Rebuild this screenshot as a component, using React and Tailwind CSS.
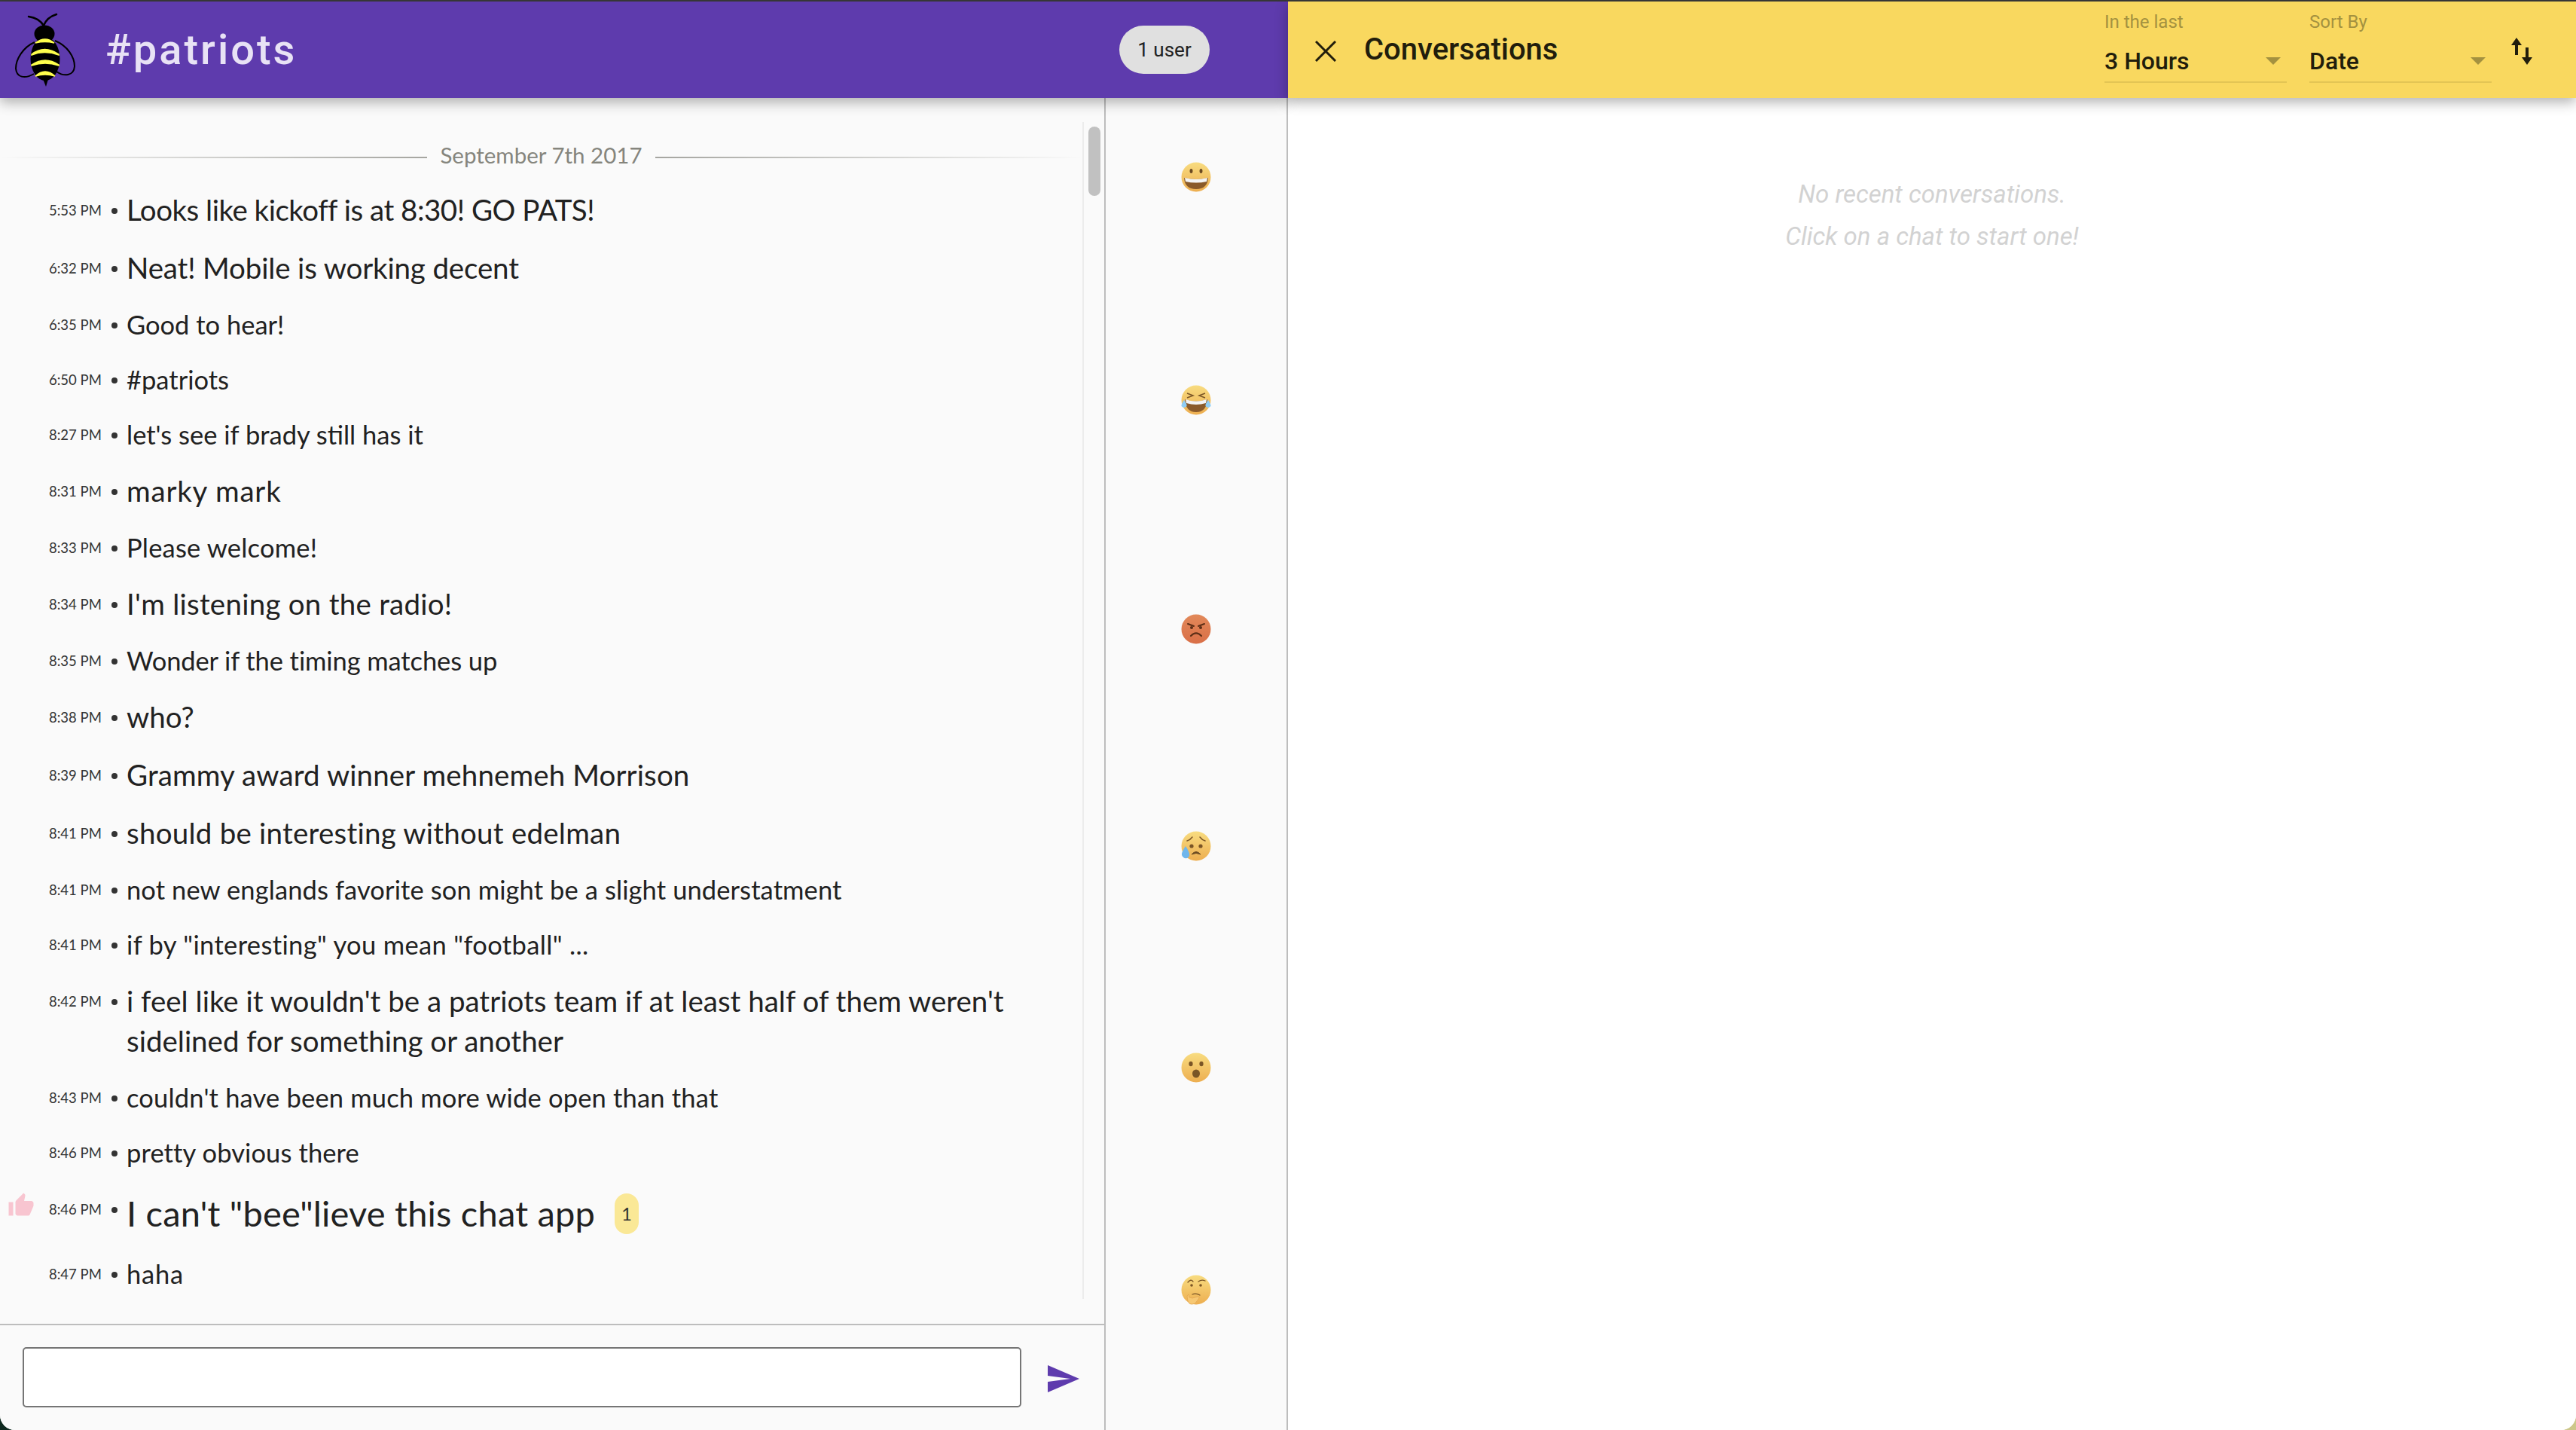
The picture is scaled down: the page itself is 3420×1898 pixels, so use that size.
import React from 'react';

const big = { text: 'text-[38.5px] leading-[53px]', time: 'h-[53px]' };
const mid = { text: 'text-[34.5px] leading-[49px]', time: 'h-[49px]' };
const huge = { text: 'text-[47px] leading-[64px]', time: 'h-[54px]' };

const messages = [
  { time: '5:53 PM', text: 'Looks like kickoff is at 8:30! GO PATS!', size: big, track: 'tracking-[-0.5px]' },
  { time: '6:32 PM', text: 'Neat! Mobile is working decent', size: big, track: 'tracking-[-0.15px]' },
  { time: '6:35 PM', text: 'Good to hear!', size: mid },
  { time: '6:50 PM', text: '#patriots', size: mid },
  { time: '8:27 PM', text: "let's see if brady still has it", size: mid },
  { time: '8:31 PM', text: 'marky mark', size: big, track: 'tracking-[0.8px]' },
  { time: '8:33 PM', text: 'Please welcome!', size: mid, track: 'tracking-[0.2px]' },
  { time: '8:34 PM', text: "I'm listening on the radio!", size: big, track: 'tracking-[0.25px]' },
  { time: '8:35 PM', text: 'Wonder if the timing matches up', size: mid, track: 'tracking-[-0.1px]' },
  { time: '8:38 PM', text: 'who?', size: big },
  { time: '8:39 PM', text: 'Grammy award winner mehnemeh Morrison', size: big, track: 'tracking-[0.12px]' },
  { time: '8:41 PM', text: 'should be interesting without edelman', size: big, track: 'tracking-[0.24px]' },
  { time: '8:41 PM', text: 'not new englands favorite son might be a slight understatment', size: mid, track: 'tracking-[0.1px]' },
  { time: '8:41 PM', text: 'if by "interesting" you mean "football" ...', size: mid, track: 'tracking-[0.35px]' },
  { time: '8:42 PM', text: "i feel like it wouldn't be a patriots team if at least half of them weren't\nsidelined for something or another", size: big },
  { time: '8:43 PM', text: "couldn't have been much more wide open than that", size: mid, track: 'tracking-[0.18px]' },
  { time: '8:46 PM', text: 'pretty obvious there', size: mid, track: 'tracking-[0.1px]' },
  { time: '8:46 PM', text: 'I can\'t "bee"lieve this chat app', size: huge, track: 'tracking-[0.2px]', liked: true, likes: 1 },
  { time: '8:47 PM', text: 'haha', size: mid, track: 'tracking-[0.8px]' },
];

function Bee() {
  return (
    <svg viewBox="0 0 130 130" className="h-[130px] w-[130px] shrink-0">
      <path d="M38 21Q52 23 58 33M75 18Q62 22 58 33" fill="none" stroke="#000" strokeWidth="2.5" strokeLinecap="round" />
      <path d="M46 55C30 62 21 78 21 90C22 102 33 104 45 97M73 53C90 60 99 75 99 87C98 100 85 101 75 94" fill="none" stroke="#000" strokeWidth="2" />
      <ellipse cx="59" cy="44" rx="13.5" ry="11.5" />
      <ellipse cx="60" cy="77" rx="19.5" ry="29" />
      <path d="M57 104L61 114L64 104Z" />
      <path d="M47 56Q60 46 72 56Q60 53 47 56Z" fill="#ffff4d" stroke="#ffff4d" strokeWidth="1.5" />
      <path d="M42 71Q59 58 78 71L78 72Q59 65 42 72Z" fill="#ffff4d" stroke="#ffff4d" strokeWidth="1.5" />
      <path d="M42 85Q60 73 78 85L78 86Q60 80 42 86Z" fill="#ffff4d" stroke="#ffff4d" strokeWidth="1.5" />
      <path d="M47 100Q60 88 73 100Q60 96 47 100Z" fill="#ffff4d" stroke="#ffff4d" strokeWidth="1.5" />
    </svg>
  );
}

function Face({ id, top = '#f8dc80', bottom = '#edae50', children }) {
  return (
    <svg viewBox="0 0 40 40" className="h-10 w-10 blur-[0.4px]">
      <defs>
        <linearGradient id={id} x1="0" y1="0" x2="0" y2="1">
          <stop offset="0" stopColor={top} />
          <stop offset="1" stopColor={bottom} />
        </linearGradient>
      </defs>
      <circle cx="20" cy="20" r="19.5" fill={`url(#${id})`} />
      {children}
    </svg>
  );
}

const emojis = [
  {
    mt: 'mt-0',
    face: (
      <Face id="grin">
        <ellipse cx="13.5" cy="12" rx="2" ry="3" fill="#6b4a22" />
        <ellipse cx="26.5" cy="12" rx="2" ry="3" fill="#6b4a22" />
        <path d="M4 21Q20 25 36 21Q35 36 20 36Q5 36 4 21Z" fill="#8a5a2a" />
        <path d="M5 21Q20 25 35 21L34 26Q20 29 6 26Z" fill="#f4f4f4" />
      </Face>
    ),
  },
  {
    mt: 'mt-[256px]',
    face: (
      <Face id="laugh">
        <path d="M8 11L16 14L8 17M32 11L24 14L32 17" fill="none" stroke="#7a5526" strokeWidth="1.5" />
        <path d="M5 19Q20 24 35 19Q34 36 20 36Q6 36 5 19Z" fill="#8a5a2a" />
        <path d="M6 19Q20 24 34 19L33 24Q20 28 7 24Z" fill="#f4f4f4" />
        <path d="M4 20Q0 26 0.5 28Q4 32 7.5 28Q8 25 4 20ZM36 20Q40 26 39.5 28Q36 32 32.5 28Q32 25 36 20Z" fill="#8fcdf5" />
      </Face>
    ),
  },
  {
    mt: 'mt-[264px]',
    face: (
      <Face id="angry" top="#e2895a" bottom="#d96f47">
        <path d="M9 13L17 16M31 13L23 16" stroke="#5d2f17" strokeWidth="2" strokeLinecap="round" />
        <circle cx="14" cy="18" r="2" fill="#5d2f17" />
        <circle cx="26" cy="18" r="2" fill="#5d2f17" />
        <path d="M13 29Q20 22 27 29" fill="none" stroke="#5d2f17" strokeWidth="2.2" strokeLinecap="round" />
      </Face>
    ),
  },
  {
    mt: 'mt-[248px]',
    face: (
      <Face id="sad">
        <path d="M8 13Q12 12 15 8M32 13Q28 12 25 8" fill="none" stroke="#7a5526" strokeWidth="1.5" strokeLinecap="round" />
        <circle cx="14" cy="20" r="2.6" fill="#7a5526" />
        <circle cx="26" cy="20" r="2.6" fill="#7a5526" />
        <path d="M14 31Q20 24 26 31Q20 28 14 31Z" fill="#6b4a22" stroke="#6b4a22" strokeWidth="1" />
        <path d="M6 20Q0 29 1 32Q3 37 8 36Q12 34 11 30Q10 26 6 20Z" fill="#6fb6ec" />
      </Face>
    ),
  },
  {
    mt: 'mt-[254px]',
    face: (
      <Face id="wow">
        <ellipse cx="13" cy="15" rx="2.6" ry="3.2" fill="#7a5526" />
        <ellipse cx="27" cy="15" rx="2.6" ry="3.2" fill="#7a5526" />
        <ellipse cx="20" cy="28" rx="5" ry="5.5" fill="#7a5526" />
      </Face>
    ),
  },
  {
    mt: 'mt-[255px]',
    face: (
      <Face id="think">
        <path d="M9 10Q13 5 16 9M23 9Q27 6 32 8" fill="none" stroke="#7a5526" strokeWidth="1.3" strokeLinecap="round" />
        <circle cx="14" cy="14" r="1.8" fill="#7a5526" />
        <circle cx="26" cy="14" r="1.8" fill="#7a5526" />
        <path d="M15 26Q20 24 25 27" fill="none" stroke="#7a5526" strokeWidth="1.3" strokeLinecap="round" />
        <path d="M8 28L9 35Q11 40 15 39Q19 39 21 35L24 31Q25 29 22 29L15 31L11 30L10 26Z" fill="#f7c873" stroke="#e0a24e" strokeWidth="0.7" />
      </Face>
    ),
  },
];

function Message({ message }) {
  return (
    <div className="relative flex items-start py-3 pl-[65px]">
      {message.liked && (
        <svg viewBox="0 0 24 24" className="absolute left-[10px] top-[16px] h-9 w-9 fill-[#f8c5d0]">
          <path d="M1 21h4V9H1v12zm22-11c0-1.1-.9-2-2-2h-6.31l.95-4.57.03-.32c0-.41-.17-.79-.44-1.06L14.17 1 7.59 7.59C7.22 7.95 7 8.45 7 9v10c0 1.1.9 2 2 2h9c.83 0 1.54-.5 1.84-1.22l3.02-7.05c.09-.23.14-.47.14-.73v-2z" />
        </svg>
      )}
      <div className={`flex w-[103px] shrink-0 items-center pt-[2px] ${message.size.time}`}>
        <span className="w-[83px] text-[18.5px] text-[#333333]">{message.time}</span>
        <span className="h-2 w-2 rounded-full bg-[#333333]" />
      </div>
      <p className={`whitespace-pre text-[#212121] ${message.size.text} ${message.track || ''}`}>{message.text}</p>
      {message.likes && (
        <span className="ml-[26px] mt-[6px] flex h-[54px] w-8 items-center justify-center rounded-2xl bg-[#fae896] text-[24px] text-[#333333]">
          {message.likes}
        </span>
      )}
    </div>
  );
}

function Select({ label, value }) {
  return (
    <div className="mb-[8px] flex w-[242px] flex-col font-medium">
      <span className="text-[24px] font-normal leading-[30px] text-[#a4913f]">{label}</span>
      <div className="mt-[10px] flex h-[56px] items-center justify-between border-b-2 border-[#e3c554] pr-2">
        <span className="text-[32px] text-[#211d0c]">{value}</span>
        <svg viewBox="0 0 20 10" className="h-[10px] w-5 fill-[#a4913f]">
          <path d="M0 0H20L10 10Z" />
        </svg>
      </div>
    </div>
  );
}

export default function App() {
  return (
    <div className="h-[1898px] w-[3420px] overflow-hidden bg-[linear-gradient(90deg,#0f2a20_50%,#cdc78a_50%)] font-[Lato,sans-serif]">
      <div className="flex h-full flex-col overflow-hidden rounded-b-[20px] bg-white">
        <div className="h-[2px] shrink-0 bg-[#3a3a3a]" />
        <div className="flex min-h-0 flex-1">
          {/* channel side */}
          <div className="flex w-[1710px] shrink-0 flex-col bg-[#fafafa]">
            <header className="relative z-10 flex h-[128px] shrink-0 items-center bg-[#5e3bad] pr-[104px] shadow-[0_6px_16px_rgba(0,0,0,0.3)]">
              <Bee />
              <h1 className="ml-[10px] font-[Roboto,sans-serif] text-[56px] font-medium tracking-[3px] text-[#e8e2f5]">#patriots</h1>
              <span className="ml-auto flex h-16 w-[120px] items-center justify-center rounded-[32px] bg-[#e0e0e0] font-[Roboto,sans-serif] text-[26px] text-[#212121]">
                1 user
              </span>
            </header>
            <div className="flex min-h-0 flex-1">
              <div className="flex w-[1466px] shrink-0 flex-col">
                <div className="flex min-h-0 flex-1">
                  <div className="w-[1437px] shrink-0 overflow-hidden pt-[56px]">
                    <div className="mb-[8px] flex h-[46px] items-center">
                      <div className="h-[2px] flex-1 bg-[linear-gradient(90deg,transparent,#a5a5a0)]" />
                      <span className="px-[17px] pb-[5px] text-[29.5px] text-[#85857d]">September 7th 2017</span>
                      <div className="h-[2px] flex-1 bg-[linear-gradient(90deg,#a5a5a0,transparent)]" />
                    </div>
                    {messages.map((message, i) => (
                      <Message key={i} message={message} />
                    ))}
                  </div>
                  <div className="mb-[33px] mt-[32px] flex-1 border-l-2 border-[#ececec] pl-[6px] pt-[6px]">
                    <div className="h-[92px] w-4 rounded-lg bg-[#c1c1c1]" />
                  </div>
                </div>
                <div className="flex h-[141px] shrink-0 items-start border-t-2 border-[#bdbdbd] pl-[30px] pt-[29px]">
                  <input type="text" className="h-[80px] w-[1326px] rounded-[5px] border-[2.5px] border-[#757575] bg-white" />
                  <svg viewBox="0 0 24 24" className="ml-[31px] mt-[18px] h-12 w-12 fill-[#5e3bad]">
                    <path d="M2.01 21L23 12 2.01 3 2 10l15 2-15 2z" />
                  </svg>
                </div>
              </div>
              {/* reaction column */}
              <div className="flex flex-1 flex-col items-center border-x-2 border-[#bdbdbd] pt-[85px]">
                {emojis.map((emoji, i) => (
                  <div key={i} className={emoji.mt}>
                    {emoji.face}
                  </div>
                ))}
              </div>
            </div>
          </div>
          {/* conversations side */}
          <div className="flex flex-1 flex-col bg-white font-[Roboto,sans-serif]">
            <header className="relative z-10 flex h-[128px] shrink-0 items-center bg-[#f9d85f] pl-[36px] shadow-[0_6px_16px_rgba(0,0,0,0.3)]">
              <svg viewBox="0 0 28 28" className="mt-[4px] h-7 w-7" fill="none" stroke="#211d0c" strokeWidth="3">
                <path d="M1 1L27 27M27 1L1 27" />
              </svg>
              <h2 className="ml-[37px] text-[40px] font-medium text-[#211d0c]">Conversations</h2>
              <div className="ml-auto flex gap-[30px]">
                <Select label="In the last" value="3 Hours" />
                <Select label="Sort By" value="Date" />
              </div>
              <svg viewBox="0 0 28 36" className="ml-[26px] mr-[58px] mt-[4px] h-9 w-7 fill-[#211d0c]">
                <path d="M7 0L14 10H9V23H5V10H0Z" />
                <path d="M21 36L28 26H23V13H19V26H14Z" />
              </svg>
            </header>
            <div className="flex flex-col items-center pt-[100px] text-[33px] italic leading-[56px] text-[#d2d2d2]">
              <span>No recent conversations.</span>
              <span>Click on a chat to start one!</span>
            </div>
          </div>
        </div>
      </div>
    </div>
  );
}
